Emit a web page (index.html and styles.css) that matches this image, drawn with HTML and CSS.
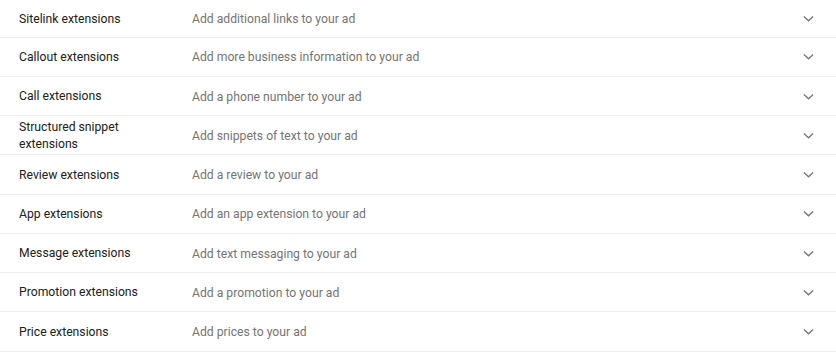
FILE: index.html
```html
<!DOCTYPE html>
<html>
<head>
<meta charset="utf-8">
<link rel="stylesheet" href="styles.css">
</head>
<body>
<div class="list">
  <div class="row first"><div class="title">Sitelink extensions</div><div class="desc">Add additional links to your ad</div><svg class="chev" viewBox="0 0 12 8"><path d="M1 1.2 L6 6 L11 1.2" /></svg></div>
  <div class="row"><div class="title">Callout extensions</div><div class="desc">Add more business information to your ad</div><svg class="chev" viewBox="0 0 12 8"><path d="M1 1.2 L6 6 L11 1.2" /></svg></div>
  <div class="row"><div class="title">Call extensions</div><div class="desc">Add a phone number to your ad</div><svg class="chev" viewBox="0 0 12 8"><path d="M1 1.2 L6 6 L11 1.2" /></svg></div>
  <div class="row"><div class="title">Structured snippet extensions</div><div class="desc">Add snippets of text to your ad</div><svg class="chev" viewBox="0 0 12 8"><path d="M1 1.2 L6 6 L11 1.2" /></svg></div>
  <div class="row"><div class="title">Review extensions</div><div class="desc">Add a review to your ad</div><svg class="chev" viewBox="0 0 12 8"><path d="M1 1.2 L6 6 L11 1.2" /></svg></div>
  <div class="row"><div class="title">App extensions</div><div class="desc">Add an app extension to your ad</div><svg class="chev" viewBox="0 0 12 8"><path d="M1 1.2 L6 6 L11 1.2" /></svg></div>
  <div class="row"><div class="title">Message extensions</div><div class="desc">Add text messaging to your ad</div><svg class="chev" viewBox="0 0 12 8"><path d="M1 1.2 L6 6 L11 1.2" /></svg></div>
  <div class="row"><div class="title">Promotion extensions</div><div class="desc">Add a promotion to your ad</div><svg class="chev" viewBox="0 0 12 8"><path d="M1 1.2 L6 6 L11 1.2" /></svg></div>
  <div class="row"><div class="title">Price extensions</div><div class="desc">Add prices to your ad</div><svg class="chev" viewBox="0 0 12 8"><path d="M1 1.2 L6 6 L11 1.2" /></svg></div>
</div>
</body>
</html>
```
FILE: styles.css
```css
html, body {
  margin: 0;
  padding: 0;
  background: #fff;
}
body {
  font-family: Roboto, "Liberation Sans", sans-serif;
  font-size: 12.2px;
}
.list {
  display: flex;
  flex-direction: column;
}
.row {
  display: flex;
  align-items: center;
  height: 36.75px;
  padding-top: 1.5px;
  border-bottom: 1px solid #eeeeee;
  padding-left: 19px;
  padding-right: 22px;
}
.row.first {
  height: 35px;
}
.title {
  width: 150px;
  margin-right: 23px;
  color: #212121;
  line-height: 17px;
  flex-shrink: 0;
}
.desc {
  flex: 1;
  color: #757575;
}
.chev {
  width: 11px;
  height: 8px;
  fill: none;
  stroke: #757575;
  stroke-width: 1.4;
}
```
